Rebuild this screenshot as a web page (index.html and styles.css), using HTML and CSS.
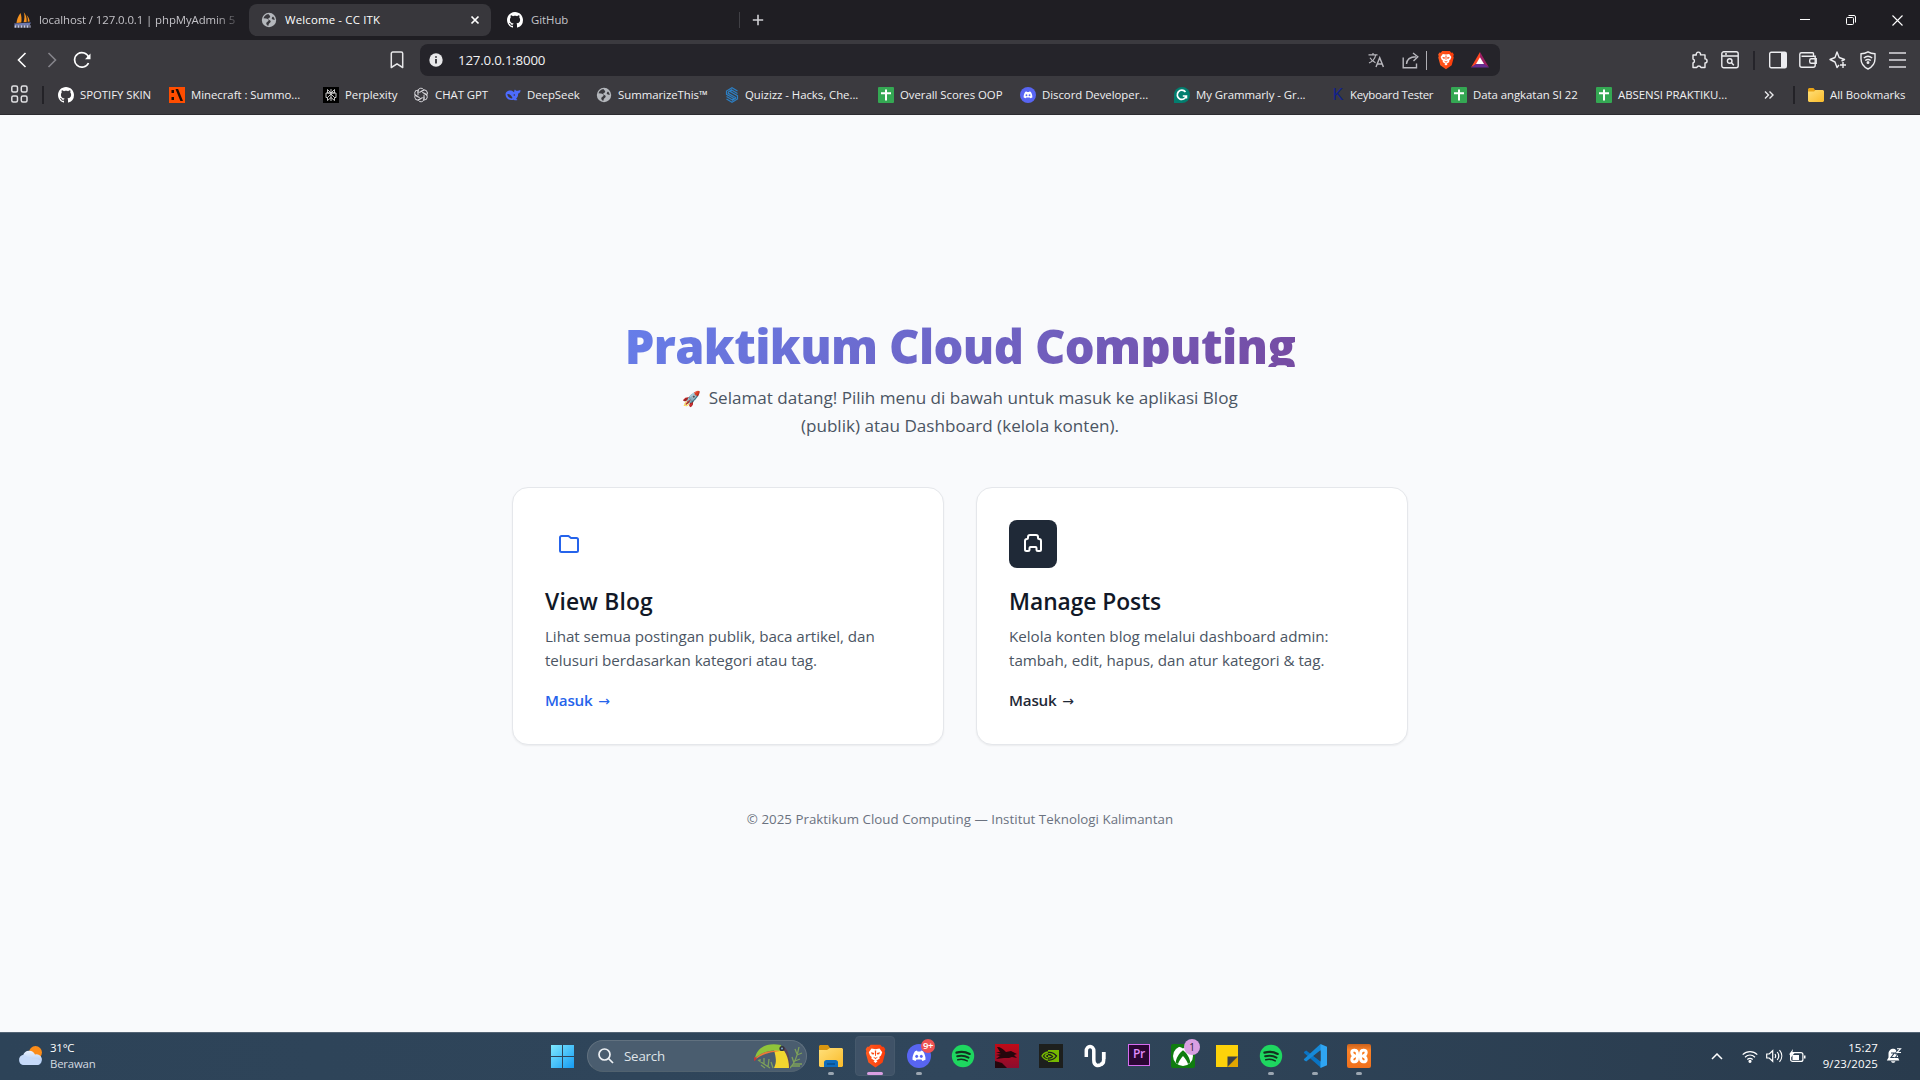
FILE: index.html
```
<!DOCTYPE html>
<html lang="id">
<head>
<meta charset="utf-8">
<title>Welcome - CC ITK</title>
<link rel="stylesheet" href="styles.css">
</head>
<body>
<svg class="defs" aria-hidden="true">
  <defs>
    <linearGradient id="gWin" x1="0" y1="0" x2="1" y2="1"><stop offset="0" stop-color="#7fe9ff"/><stop offset="1" stop-color="#159bf3"/></linearGradient>
    <linearGradient id="gFolder" x1="0" y1="0" x2="1" y2="1"><stop offset="0" stop-color="#ffe07a"/><stop offset="1" stop-color="#fabb2a"/></linearGradient>
    <linearGradient id="gCloud" x1="0" y1="0" x2="0" y2="1"><stop offset="0" stop-color="#eaf2ff"/><stop offset="1" stop-color="#a3c2f0"/></linearGradient>
    <linearGradient id="gBrave" x1="0" y1="0" x2="1" y2="0"><stop offset="0" stop-color="#ff5a1f"/><stop offset="1" stop-color="#fb3b0a"/></linearGradient>
    <linearGradient id="gXampp" x1="0" y1="0" x2="0" y2="1"><stop offset="0" stop-color="#c9611c"/><stop offset=".25" stop-color="#fb8227"/><stop offset="1" stop-color="#f0701c"/></linearGradient>
    <linearGradient id="gRed" x1="0" y1="0" x2="0" y2="1"><stop offset="0" stop-color="#c00a17"/><stop offset="1" stop-color="#8c0c2e"/></linearGradient>
    <symbol id="github" viewBox="0 0 16 16"><path fill="#fff" d="M8 0C3.58 0 0 3.58 0 8c0 3.54 2.29 6.53 5.47 7.59.4.07.55-.17.55-.38 0-.19-.01-.82-.01-1.49-2.01.37-2.53-.49-2.69-.94-.09-.23-.48-.94-.82-1.13-.28-.15-.68-.52-.01-.53.63-.01 1.08.58 1.23.82.72 1.21 1.87.87 2.33.66.07-.52.28-.87.51-1.07-1.78-.2-3.64-.89-3.64-3.95 0-.87.31-1.59.82-2.15-.08-.2-.36-1.02.08-2.12 0 0 .67-.21 2.2.82.64-.18 1.32-.27 2-.27s1.36.09 2 .27c1.53-1.04 2.2-.82 2.2-.82.44 1.1.16 1.92.08 2.12.51.56.82 1.27.82 2.15 0 3.07-1.87 3.75-3.65 3.95.29.25.54.73.54 1.48 0 1.07-.01 1.93-.01 2.2 0 .21.15.46.55.38A8.01 8.01 0 0 0 16 8c0-4.42-3.58-8-8-8z"/></symbol>
    <symbol id="globe" viewBox="0 0 16 16"><circle cx="8" cy="8" r="7.200" fill="#b4b7bc"/><path fill="#3a393e" d="M7.500 2C5 2.500 3 4 2.500 6.200l2.500.3c1.500.3 3 1 2.500 2.300-.3 1-1.800 1-2.200 2.200-.2 1 .3 1.800 1.200 2.500l1 .2c0-1.200.3-2 1.200-2.700.8-.7 1.300-1.500.8-2.300-.6-.9-2-.8-2.300-1.800 0-1 1.600-1 2-1.900.3-.8-.7-1.500-1.700-2.800zM12 4.500c-.7.700-1.500 1.400-1.200 2.300.5.9 1.700.7 2.900 1.300-.1-1.500-.7-2.700-1.700-3.600z"/></symbol>
    <symbol id="sheets" viewBox="0 0 16 16"><rect width="16" height="16" rx="1" fill="#34a853"/><path stroke="#fff" stroke-width="2" d="M8 2.500v11M3 6.200h10"/></symbol>
    <symbol id="discord" viewBox="0 0 24 24"><circle cx="12" cy="12" r="12" fill="#5865f2"/><path fill="#fff" d="M8 7.200 10 6.600l.5 1h3l.5-1 2 .6c1.800 2.600 2.700 5.600 2.500 8.600L15.500 17l-1-1.400h-5L8.500 17l-3-1.200c-.2-3 .7-6 2.500-8.600z"/><ellipse cx="9.700" cy="12.300" rx="1.400" ry="1.600" fill="#5865f2"/><ellipse cx="14.300" cy="12.300" rx="1.400" ry="1.600" fill="#5865f2"/></symbol>
    <symbol id="spotify" viewBox="0 0 24 24"><circle cx="12" cy="12" r="11.200" fill="#1ed760"/><g fill="none" stroke="#14301f" stroke-linecap="round"><path stroke-width="2.300" d="M5.500 8.600c4.500-1.300 9.300-.8 13.200 1.300"/><path stroke-width="2" d="M6.200 12.300c4-1 8-.5 11.300 1.300"/><path stroke-width="1.600" d="M6.800 15.700c3.400-.8 6.600-.4 9.400 1.200"/></g></symbol>
    <symbol id="brave" viewBox="0 0 20 24"><path fill="url(#gBrave)" d="M5.200.8h9.600l1.700 2 1.700-.1 1.600 2.500-.7 2 .6 1.800-2.600 9.500L10 23.600l-7.100-5.100L.3 9l.6-1.800-.7-2 1.600-2.500 1.700.1z"/><path fill="#fff" d="M6 4.500l4 .7 4-.7 2.700 3.700-1.200 3.300-1.700 1.500.4 1.500L10 17.200l-4.200-2.700.4-1.500-1.700-1.500-1.200-3.300z"/><path fill="#fb4a15" d="M5.500 8.300l3.300.6-.5 1.500-2-.2zM14.500 8.300l-3.300.6.5 1.500 2-.2zM9.300 6.500h1.400L10.400 12h-.8zM7.500 12.800l2.500 1 2.500-1-2.500 2.500z"/><path fill="#fff" d="M8 17.300l2-1 2 1-2 1.600z"/></symbol>
  </defs>
</svg>

<header class="browser">
  <div class="tabs">
    <div class="tab tab-first">
      <svg width="17" height="17" viewBox="0 0 17 17"><path fill="#f7931e" d="M6.500 1C4 4 2.800 8 2.500 11l4.800-.6C7.800 7 7.500 4 6.500 1zM9.800.3c1 3 .8 7-.2 10l3-.4C13 6 12 2.500 9.800.3zM12.500 3c1.200 2 1.500 4.500 1.200 6.800l2-.4c-.3-2.500-1.500-5-3.200-6.400z"/><path fill="#6c78af" d="M0 11.500l17-1-1.500 3H1z"/><path stroke="#c3c8e6" stroke-dasharray="2 1" stroke-width="2.500" d="M.5 14.500h16"/></svg>
      <span class="tab-label fade">localhost / 127.0.0.1 | phpMyAdmin 5</span>
    </div>
    <div class="tab tab-active">
      <svg width="16" height="16"><use href="#globe"/></svg>
      <span class="tab-label">Welcome - CC ITK</span>
      <svg class="tab-close" width="10" height="10" viewBox="0 0 10 10"><path stroke="#fff" stroke-width="1.700" d="M1.500 1.500l7 7M8.500 1.500l-7 7"/></svg>
    </div>
    <div class="tab tab-third">
      <svg width="16" height="16"><use href="#github"/></svg>
      <span class="tab-label">GitHub</span>
    </div>
    <svg class="newtab" width="12" height="12" viewBox="0 0 12 12"><path stroke="#d0d0d4" stroke-width="1.600" d="M6 .8v10.400M.8 6h10.400"/></svg>
    <div class="window-controls">
      <svg width="10" height="12" viewBox="0 0 10 12"><path stroke="#fff" d="M0 5.500h10"/></svg>
      <svg width="10" height="10" viewBox="0 0 10 10" fill="none" stroke="#fff"><rect x=".5" y="2.500" width="7" height="7" rx="1"/><path d="M2.500.5H8A1.500 1.500 0 0 1 9.500 2v5.500"/></svg>
      <svg width="11" height="11" viewBox="0 0 11 11"><path stroke="#fff" stroke-width="1.100" d="M.5.5l10 10M10.500.5l-10 10"/></svg>
    </div>
  </div>

  <div class="toolbar">
    <div class="nav">
      <svg width="10" height="16" viewBox="0 0 10 16" fill="none" stroke="#fff" stroke-width="1.600"><path d="M8.500 1L1.500 8l7 7"/></svg>
      <svg width="10" height="16" viewBox="0 0 10 16" fill="none" stroke="#85848a" stroke-width="1.600"><path d="M1.500 1l7 7-7 7"/></svg>
      <svg width="18" height="18" viewBox="0 0 18 18" fill="none" stroke="#fff" stroke-width="1.700"><path d="M15.500 12A7.300 7.300 0 1 1 15.800 6.500"/><path fill="#fff" stroke="none" d="M17.500 2.500v5.700h-5.500z"/></svg>
    </div>
    <svg class="bookmark" width="14" height="18" viewBox="0 0 14 18"><path fill="none" stroke="#e6e6e8" stroke-width="1.500" stroke-linejoin="round" d="M2.800 1h8.400c.9 0 1.500.6 1.500 1.500V16.500L7 12.800 1.300 16.500V2.500C1.300 1.600 1.900 1 2.800 1z"/></svg>
    <div class="address">
      <svg width="14" height="14" viewBox="0 0 14 14"><circle cx="7" cy="7" r="6.700" fill="#e8e8ea"/><path stroke="#25242a" stroke-width="1.700" d="M7 6v4.500M7 3.200v1.600"/></svg>
      <span class="url">127.0.0.1:8000</span>
      <div class="address-actions">
        <svg width="16" height="16" viewBox="0 0 16 16" fill="none" stroke="#b9b8be" stroke-width="1.200"><path d="M.5 2.800h9M5 1v1.800M2 5.800c1.500 2.500 3.500 4 5.500 5M7.700 3C7 6.500 4.500 9.500 1 11"/><path stroke-width="1.400" d="M8 15l3.700-9.300L15.400 15M9.200 12h5"/></svg>
        <svg width="17" height="17" viewBox="0 0 17 17" fill="none" stroke="#b9b8be" stroke-width="1.400"><path d="M1.200 5.500v10.200h13.300V11.500"/><path d="M4.500 12c.3-4.500 3-7 9.500-7.200M11 1l4.800 3.700L11.500 9"/></svg>
        <i class="address-sep"></i>
        <svg width="16" height="20"><use href="#brave"/></svg>
        <svg width="18" height="16" viewBox="0 0 18 16"><path fill="#ff4724" d="M9 0L0 15.500 9 10z"/><path fill="#9e1f63" d="M9 0l9 15.500L9 10z"/><path fill="#662d91" d="M0 15.500h18L9 9z"/><path fill="#fff" d="M9 5.300l4 6.700H5z"/></svg>
      </div>
    </div>
    <div class="actions">
      <svg width="18" height="18" viewBox="0 0 18 18" fill="none" stroke="#ededf0" stroke-width="1.400" stroke-linejoin="round"><path d="M2 4h3.300a2.200 2.200 0 1 1 4.200-.1H14v4a2 2 0 1 1 0 4.100v4.500h-4a2.200 2.200 0 0 0-4.200 0H2V12a2.100 2.100 0 0 0 0-4z"/></svg>
      <svg width="18" height="18" viewBox="0 0 18 18" fill="none" stroke="#ededf0" stroke-width="1.400"><rect x=".8" y=".8" width="16.400" height="16" rx="2"/><path d="M1 5h16M4 3h2"/><circle cx="8.700" cy="10" r="2.300"/><path d="M10.500 11.700l2.300 2.500"/></svg>
      <i class="action-sep"></i>
      <svg width="18" height="18" viewBox="0 0 18 18"><rect x=".7" y="1.200" width="16.600" height="15.600" rx="1.500" fill="none" stroke="#ededf0" stroke-width="1.400"/><path fill="#ededf0" d="M12 1.500h5v15h-5z"/></svg>
      <svg width="18" height="16" viewBox="0 0 18 16" fill="none" stroke="#ededf0" stroke-width="1.400"><path d="M14.500 4V1.500a.8.800 0 0 0-.8-.8H2.500C1.500.7.800 1.400.800 2.300v11c0 1.200.7 2 2 2h11.400c1.300 0 2-.8 2-2V4.200H2.500"/><path d="M17.200 6.700h-5a1.500 1.500 0 0 0-1.500 1.500v1.600c0 .9.600 1.500 1.500 1.500h5z"/></svg>
      <svg width="18" height="18" viewBox="0 0 18 18" fill="none" stroke="#ededf0" stroke-width="1.400" stroke-linejoin="round"><path d="M10 14l-2 2.500-2-5.500L1 8.500 6 6.500 8 1l2.200 5.500L15.500 8.500l-3 1.500"/><path d="M14 11v6M11 14h6"/></svg>
      <svg width="18" height="19" viewBox="-1 0 18 19" fill="none" stroke="#ededf0" stroke-width="1.400"><path d="M8 .8c2.300 1.400 4.600 1.900 7 2v5c0 4.800-2.800 8.200-7 10.200C3.800 16 1 12.600 1 7.800v-5c2.400-.1 4.700-.6 7-2z"/><path d="M3.800 7c2.500-2 5.900-2 8.400 0M5.200 9.500c1.700-1.300 3.900-1.300 5.600 0"/><circle cx="8" cy="11.500" r=".8"/></svg>
      <svg width="17" height="18" viewBox="0 0 17 18"><path stroke="#b4b3b8" stroke-width="2" d="M0 2h17M0 9h17M0 16h17"/></svg>
    </div>
  </div>

  <nav class="bookmarks">
    <div><svg width="17" height="19" viewBox="0 0 17 19" fill="none" stroke="#dfdfe2" stroke-width="1.500"><rect x=".8" y="1" width="5.700" height="6" rx="1.500"/><rect x="10.300" y="1" width="5.700" height="6" rx="1.500"/><rect x=".8" y="11" width="5.700" height="6" rx="1.500"/><rect x="10.300" y="11" width="5.700" height="6" rx="1.500"/></svg></div>
    <i class="bookmark-sep"></i>
    <div><svg width="16" height="16"><use href="#github"/></svg><span>SPOTIFY SKIN</span></div>
    <div><svg width="16" height="16" viewBox="0 0 16 16"><path fill="#ff4d00" d="M0 0h16v16H0z"/><path fill="#1b0d06" d="M2.500 3h2.500v3H2.500zM2.500 10h2.500v3H2.500zM6.500 2h2.600L14 14h-2.600z"/></svg><span>Minecraft : Summo...</span></div>
    <div><svg width="16" height="16" viewBox="0 0 16 16"><path d="M0 0h16v16H0z"/><path fill="none" stroke="#d8d8d8" stroke-width=".9" d="M8 2v12M4.500 2.500L8 6l3.500-3.500V6h-7zM3 6h10v4.500h-1.500L8 7l-3.500 3.500H3zM4.500 10.500V13.500L8 10.500l3.500 3v-3"/></svg><span>Perplexity</span></div>
    <div><svg width="16" height="16" viewBox="0 0 16 16" fill="none" stroke="#d2d1d6" stroke-width="1"><g id="petal"><path d="M5 8.200V4.200a3 3 0 0 1 5.600-1.500M8 4.600l3.300-1.900"/></g><use href="#petal" transform="rotate(60 8 8)"/><use href="#petal" transform="rotate(120 8 8)"/><use href="#petal" transform="rotate(180 8 8)"/><use href="#petal" transform="rotate(240 8 8)"/><use href="#petal" transform="rotate(300 8 8)"/></svg><span>CHAT GPT</span></div>
    <div><svg width="16" height="16" viewBox="0 0 16 16"><path fill="#4d6bfe" d="M.5 7C.8 4.500 3.500 3 6 3.500c1.500.2 2 1.200 3.200 1.800C9 3.800 9.600 3 10 2.500c.5 1.200 1.500 1.500 2.600 1.300.9-.3 1.500-.8 3-.6-.2 1.900-1.100 2.900-2.500 3.300.1 2.300-.6 4-2 5.200l1.400 1.200c-1.500.7-2.800.5-3.800-.1C4.500 14 .3 11.500.5 7z"/><path fill="#3a393e" d="M2.300 7.200c2-.5 3.700 1 5 3.400.8 1.200-1.500 1-2.700.2C3.200 9.900 2.500 8.700 2.300 7.200z"/><circle cx="9.300" cy="8" r=".8" fill="#3a393e"/></svg><span>DeepSeek</span></div>
    <div><svg width="16" height="16"><use href="#globe"/></svg><span>SummarizeThis™</span></div>
    <div><svg width="14" height="16" viewBox="1 0 14 16" fill="none" stroke="#2c7fc4" stroke-width="1.200"><path d="M13.500 4L8 .8 2.500 4v3.300L10 11.600 8 12.700 2.500 9.500M2.500 12L8 15.200l5.500-3.200V8.700L6 4.400l2-1.100 5.500 3.200M4.300 5v1.300l7.400 4.300v.6L8 13.500M4.300 5L8 2.500"/></svg><span>Quizizz - Hacks, Che...</span></div>
    <div><svg width="16" height="16"><use href="#sheets"/></svg><span>Overall Scores OOP</span></div>
    <div><svg width="16" height="16"><use href="#discord"/></svg><span>Discord Developer...</span></div>
    <div><svg width="16" height="16" viewBox="0 0 16 16"><path fill="#027e6f" d="M8 0a8 8 0 0 1 0 16H0V8a8 8 0 0 1 8-8z"/><path fill="none" stroke="#fff" stroke-width="1.700" d="M11.500 5A4.600 4.600 0 1 0 12.300 9H8.800M12.400 8.500v3"/></svg><span>My Grammarly - Gr...</span></div>
    <div class="keyboard"><b class="key">K</b><span>Keyboard Tester</span></div>
    <div><svg width="16" height="16"><use href="#sheets"/></svg><span>Data angkatan SI 22</span></div>
    <div><svg width="16" height="16"><use href="#sheets"/></svg><span>ABSENSI PRAKTIKU...</span></div>
    <div class="more"><svg width="10" height="8" viewBox="0 0 10 8" fill="none" stroke="#e9e9ec" stroke-width="1.400"><path d="M1 .5L4.500 4 1 7.500M5.500.5L9 4 5.500 7.500"/></svg></div>
    <i class="bookmark-sep"></i>
    <div><svg width="16" height="14" viewBox="0 0 16 14"><path fill="#e8a317" d="M1 0h4.500L7 2h8v3H0V1z"/><path fill="url(#gFolder)" d="M0 3.500h6L7.500 2H15l1 1v10l-1 1H1l-1-1z"/></svg><span>All Bookmarks</span></div>
  </nav>
</header>

<main class="page">
  <h1>Praktikum Cloud Computing</h1>
  <p class="lead"><span class="emoji">🚀</span> Selamat datang! Pilih menu di bawah untuk masuk ke aplikasi Blog<br>(publik) atau Dashboard (kelola konten).</p>
  <div class="cards">
    <article class="card">
      <div class="card-icon icon-blue"><svg width="24" height="24" viewBox="0 0 24 24" fill="none" stroke="#2563eb" stroke-width="2" stroke-linejoin="round"><path d="M3 5.500A1.500 1.500 0 0 1 4.500 4h7l2.500 2h5.500A1.500 1.500 0 0 1 21 7.500v11a1.500 1.500 0 0 1-1.500 1.500h-15A1.500 1.500 0 0 1 3 18.500z"/></svg></div>
      <h2>View Blog</h2>
      <p>Lihat semua postingan publik, baca artikel, dan<br>telusuri berdasarkan kategori atau tag.</p>
      <a class="link-blue">Masuk <span>→</span></a>
    </article>
    <article class="card">
      <div class="card-icon icon-dark"><svg width="24" height="24" viewBox="0 0 24 24" fill="none" stroke="#fff" stroke-width="2" stroke-linejoin="round"><path d="M9 3h6a2 2 0 0 1 2 2v1a1 1 0 0 0 1 1 2 2 0 0 1 2 2v8.500a1.500 1.500 0 0 1-1.500 1.500H17a1.500 1.500 0 0 1-1.500-1.500V16a1 1 0 0 0-1-1h-5a1 1 0 0 0-1 1v1.500A1.500 1.500 0 0 1 7 19H5.500A1.500 1.500 0 0 1 4 17.500V9a2 2 0 0 1 2-2 1 1 0 0 0 1-1V5a2 2 0 0 1 2-2z"/></svg></div>
      <h2>Manage Posts</h2>
      <p>Kelola konten blog melalui dashboard admin:<br>tambah, edit, hapus, dan atur kategori &amp; tag.</p>
      <a class="link-dark">Masuk <span>→</span></a>
    </article>
  </div>
  <footer>© 2025 Praktikum Cloud Computing — Institut Teknologi Kalimantan</footer>
</main>

<div class="taskbar">
  <div class="weather">
    <svg width="26" height="24" viewBox="0 0 26 24"><circle cx="17.500" cy="8.500" r="6.500" fill="#fb8c1a"/><path fill="url(#gCloud)" d="M6 21a5 5 0 0 1-.8-9.900A6.300 6.300 0 0 1 17 10.500a5.400 5.400 0 0 1 3 10.500z"/><path fill="#c6daf9" d="M6 21a5 5 0 0 1-.3-9.900c2 0 3.300 1 4 2.200 2-.8 4.300 0 5 1.700 2-1 5-.5 8 2-.3 2.500-1.500 3.700-3 4z"/></svg>
    <div><b>31°C</b><span>Berawan</span></div>
  </div>
  <div class="apps">
    <div class="start"><svg width="23" height="23" viewBox="0 0 23 23"><path fill="url(#gWin)" d="M0 0h11v11H0zM12 0h11v11H12zM0 12h11v11H0zM12 12h11v11H12z"/></svg></div>
    <div class="search">
      <svg width="16" height="16" viewBox="0 0 16 16" fill="none" stroke="#eef1f4" stroke-width="1.700"><circle cx="6.500" cy="6.500" r="5.500"/><path d="M10.500 10.500l4.500 4.500"/></svg>
      <span>Search</span>
      <svg class="toucan" width="50" height="26" viewBox="0 0 50 26"><g stroke="#7da05a" stroke-width="1.300" fill="none"><path d="M17 25L5 17M12 25l-4-3M11 21V15M7 19v-3M15 24l1-8M20 25l-2-6"/><path d="M37 25c4-4 7-10 9-21M41 20l-2-6M42 18l5-2M44 12l5-2M44 11l-2-5M39 23h8M40 21h9"/></g><path fill="#5a4458" d="M29 3c5 1 8 8 8 22h-6z"/><path fill="#f3d52f" d="M21 7c4-4 9-3 12 4 2 4 3 9 3 14H21c3-6 2-10 0-18z"/><path fill="#8fc43a" d="M2 15C4 5 13-1 28 2l1 6C17 6 8 10 2 15z"/><path fill="#ee7a36" d="M2 16C8 9 16 7 27 8c-9 1-18 3-24 8z"/><path fill="#c83639" d="M1 14l3 1c-1 2-2 3-3 3z"/><circle cx="29" cy="5.500" r="2.600" fill="#31333a"/><circle cx="29" cy="5.500" r="1" fill="#7ba8d3"/></svg>
    </div>
    <div class="app running"><svg width="24" height="23" viewBox="0 0 24 23"><path fill="#d9960f" d="M1 0h8l2 3h12v6H0V1z"/><path fill="url(#gFolder)" d="M0 5h8l3-2h12l1 1v17l-1 1H1l-1-1z"/><path fill="#0f6cbd" d="M5 22v-4.500C5 16 6 15 7.500 15h9c1.500 0 2.500 1 2.500 2.500V22z"/><path stroke="#0a4d8c" stroke-width="1.500" d="M8 19h8"/></svg></div>
    <div class="app active"><svg width="21" height="24"><use href="#brave"/></svg></div>
    <div class="app running"><svg width="24" height="24"><use href="#discord"/></svg><em class="badge red">9+</em></div>
    <div class="app"><svg width="24" height="24"><use href="#spotify"/></svg></div>
    <div class="app"><svg width="24" height="24" viewBox="0 0 24 24"><path fill="url(#gRed)" d="M0 0h24v24H0z"/><path fill="#25060c" d="M2 3c4 0 6 2 9 5l5-1 6 3-3 1 3 3-5-1-3 1-5 0-8 1 4-3-4-1 5-1-5-2 4 0zM0 17l7 2 5 5H0z"/></svg></div>
    <div class="app"><svg width="24" height="24" viewBox="0 0 24 24"><path fill="#1d1f1d" d="M0 0h24v24H0z"/><path fill="#76b900" d="M9 6h11v12H9z"/><path fill="none" stroke="#1d1f1d" stroke-width="1.300" d="M9 8.500c4-.5 6.500 1 8.500 3.500-2 3-5 4.500-8.500 4"/><path fill="none" stroke="#76b900" stroke-width="1.400" d="M9 8C6 8.500 4 10 3 12c1.500 2.500 3.500 3.800 6 4M9 10c-1.500.3-2.500 1-3 2 .7 1.200 1.700 1.800 3 2"/><path fill="none" stroke="#1d1f1d" stroke-width="1.300" d="M9 10.500c2.500 0 3.500 1 4.500 2-1 1.300-2.500 1.700-4.500 1.500"/></svg></div>
    <div class="app"><svg width="22" height="24" viewBox="0 0 22 24"><path fill="none" stroke="#fff" stroke-width="3.500" d="M2.300 13V7c0-6 7.500-6 7.500 0v9c0 6.500 5 6 6.500 4.500M19.700 8v7"/><path fill="none" stroke="#fff" stroke-width="3.500" d="M19.700 8v8c0 2.500-1.500 4.500-4 4.800"/></svg></div>
    <div class="app pr-app"><span class="pr">Pr</span></div>
    <div class="app"><svg width="24" height="24" viewBox="0 0 24 24"><rect width="24" height="24" rx="2" fill="#107c10"/><circle cx="12" cy="12" r="10" fill="#fff"/><path fill="#107c10" d="M12 6.300c4 3 7 8 7.200 12.200l-2.200 1.500c-1-3-3-6-5-8-2 2-4 5-5 8l-2.200-1.500C5 14.300 8 9.300 12 6.300zM12 4.500C9.500 3 8 2.700 6.500 3.200 9.500 1.300 14.500 1.300 17.500 3.200 16 2.700 14.500 3 12 4.500z"/></svg><em class="badge pink">1</em></div>
    <div class="app"><svg width="22" height="22" viewBox="0 0 22 22"><path fill="#fdd20a" d="M0 0h22v11.500L11.500 22H0z"/><path fill="#3b3f46" d="M11.500 11.500H22L11.500 22z"/><path fill="#e2a600" d="M22 11.500V22H11.500z"/></svg></div>
    <div class="app running"><svg width="24" height="24"><use href="#spotify"/></svg></div>
    <div class="app running"><svg width="24" height="24" viewBox="0 0 24 24"><path fill="#0a74c4" d="M1.500 7.500l1.700-1 15 11.500V24L.8 8.800z"/><path fill="#1689d8" d="M.8 15.200L17.500 0 19 5 3.200 17.500l-1.700-1z"/><path fill="#2fa5f2" d="M17.500 0L24 2.800v18.400L17.500 24z"/><path fill="#2e4358" d="M17.500 7v10L11 12z"/></svg></div>
    <div class="app running"><svg width="24" height="24" viewBox="0 0 24 24"><rect width="24" height="24" rx="2" fill="url(#gXampp)"/><path fill="none" stroke="#fff" stroke-width="3" stroke-linejoin="round" d="M8 6.200C3.500 5.500 4 11 8 12c-4 1-4.500 6.500 0 5.800 3-.3 2.500-3 2.500-5.800h3c0 2.800-.5 5.500 2.500 5.800 4.500.7 4-4.800 0-5.800 4-1 4.500-6.500 0-5.800-3 .3-2.500 3-2.500 5.800h-3c0-2.800.5-5.500-2.500-5.800z"/></svg></div>
  </div>
  <div class="tray">
    <svg width="12" height="7" viewBox="0 0 12 7"><path fill="none" stroke="#fff" stroke-width="1.500" d="M1 6l5-5 5 5"/></svg>
    <svg width="16" height="13" viewBox="0 0 16 13" fill="none" stroke="#fff" stroke-width="1.200"><path d="M.7 4.700c4.200-4.200 10.400-4.200 14.600 0M3 7.200c3-2.900 7-2.900 10 0M5.300 9.500c1.700-1.500 3.700-1.500 5.400 0"/><circle cx="8" cy="11.300" r="1" fill="#fff"/></svg>
    <svg width="17" height="14" viewBox="0 0 17 14" fill="none" stroke="#fff" stroke-width="1.200"><path d="M.7 5v4h2.500l3.500 3.300V1.700L3.200 5zM9 5c.8 1.200.8 2.800 0 4M11.200 3c1.900 2.400 1.900 5.600 0 8M13.500 1.200c3 3.500 3 8.100 0 11.600"/></svg>
    <svg width="17" height="14" viewBox="0 0 17 14"><rect x="1.600" y="3.600" width="12.300" height="8.800" rx="2" fill="none" stroke="#fff" stroke-width="1.200"/><path fill="#fff" d="M15 6.500h1.500v3H15zM3.500 6H10v5H3.500zM4 0L0 5.500h2.200L1.500 9l4-5H3.300z"/></svg>
    <div class="clock"><span>15:27</span><span>9/23/2025</span></div>
    <svg class="bell" width="16" height="16" viewBox="0 0 16 16"><path fill="#fff" d="M7.500.8C4.500.8 2.500 2.800 2.500 6v3.500L.8 12.500h12.500L12 9.500V5L9 1zM5 13.300h4.400c-.8 2-3.600 2-4.400 0z"/><path fill="none" stroke="#2c4156" stroke-width="1.100" d="M5 5h3.300L5 9.500h3.500M9.500 6H12L9.500 9.500H12"/><path fill="none" stroke="#2c4156" stroke-width="2.500" d="M10.500.8h4L11 4.500h4"/><path fill="none" stroke="#fff" stroke-width="1.100" d="M11 .8h3.500L11 4.500h4"/></svg>
  </div>
</div>
</body>
</html>
```
FILE: styles.css
```
* { box-sizing: border-box; }
body {
  margin: 0;
  width: 1920px;
  height: 1080px;
  display: flex;
  flex-direction: column;
  overflow: hidden;
  font-family: "Open Sans", "Noto Sans", sans-serif;
  background: #f9fafc;
}
svg { display: block; flex: none; }
.defs { position: absolute; width: 0; height: 0; }
h1, h2, p { margin: 0; }

/* Browser chrome */
.browser { height: 115px; flex: none; font-size: 11.4px; color: #f0f0f2; white-space: nowrap; }
.tabs { height: 40px; background: #1f1e23; display: flex; align-items: center; }
.tab { display: flex; align-items: center; height: 32px; }
.tab-label { color: #c4c3c8; letter-spacing: -.05px; padding-bottom: 1px; }
.tab-first { width: 249px; padding-left: 14px; gap: 8px; }
.tab-first .tab-label { width: 200px; letter-spacing: -.08px; }
.fade { -webkit-mask-image: linear-gradient(90deg, #000 88%, transparent 102%); mask-image: linear-gradient(90deg, #000 88%, transparent 102%); }
.tab-active { width: 242px; padding: 0 11px 0 12px; gap: 8px; background: #38373c; border-radius: 8px; }
.tab-active .tab-label { color: #fff; flex: 1; letter-spacing: .17px; }
.tab-third { width: 249px; height: 16px; padding-left: 16px; gap: 8px; border-right: 1px solid #404045; }
.newtab { margin-left: 12px; }
.window-controls { margin-left: auto; margin-right: 17px; display: flex; align-items: center; gap: 36px; }

.toolbar { height: 40px; background: #3b3a3f; display: flex; align-items: center; }
.nav { display: flex; align-items: center; width: 390px; padding-left: 17px; gap: 20px; }
.nav svg:nth-child(3) { margin-left: -4px; }
.address { width: 1080px; height: 32px; margin-left: 16px; padding: 0 11px 0 9px; display: flex; align-items: center; background: #25242a; border-radius: 8px; }
.url { margin-left: 15px; font-size: 13.3px; letter-spacing: -.2px; color: #f2f2f4; padding-bottom: 1px; }
.address-actions { margin-left: auto; display: flex; align-items: center; }
.address-actions svg:nth-child(2) { margin-left: 18px; }
.address-sep { width: 1px; height: 19px; margin: 0 11px 0 7px; background: #b0afb4; }
.address-actions svg:nth-child(5) { margin-left: 17px; }
.actions { margin-left: 191px; display: flex; align-items: center; gap: 12px; }
.action-sep { width: 2px; height: 19px; margin: 0 1px 0 2px; background: #25242a; }
.action-sep { margin-right: 2px; }

.bookmarks {
  height: 35px;
  padding: 0 15px 5px 11px;
  background: #3b3a3f;
  border-bottom: 1px solid #2c2b30;
  display: grid;
  align-items: center;
  grid-template-columns: 31px 16px 111px 154px 90px 92px 91px 129px 153px 142px 154px 156px 121px 145px 168px 29px 15px 97px;
}
.bookmarks div { display: flex; align-items: center; gap: 6px; letter-spacing: -.04px; }
.bookmarks span { padding-bottom: 1px; }
.bookmark-sep { width: 2px; height: 18px; background: #232227; }
.keyboard span { letter-spacing: -.25px; margin-left: -2px; }
.key { width: 16px; font-family: "Liberation Sans", sans-serif; font-size: 16px; font-weight: 400; line-height: 18px; color: #10218b; text-align: center; }

/* Page content */
.page { height: 917px; flex: none; padding-top: 208px; display: flex; flex-direction: column; align-items: center; }
.page h1 {
  margin-bottom: -1px;
  padding-top: 1px;
  font-size: 47px;
  font-weight: 800;
  line-height: 44px;
  letter-spacing: -.62px;
  color: transparent;
  background: linear-gradient(135deg, #667eea 0%, #764ba2 100%);
  -webkit-background-clip: text;
  background-clip: text;
}
.page h1 { height: 44px; }
.lead { margin-top: 18px; text-align: center; font-size: 17.1px; line-height: 28px; letter-spacing: 0; color: #4b5563; }
.emoji { font-size: 15px; line-height: 1; margin-right: 3px; }
.cards { margin-top: 47px; display: grid; grid-template-columns: 432px 432px; gap: 32px; }
.card { height: 258px; padding: 32px; background: #fff; border: 1px solid #e5e7eb; border-radius: 16px; box-shadow: 0 1px 2px rgba(0, 0, 0, .06); }
.card-icon { width: 48px; height: 48px; border-radius: 8px; display: grid; place-items: center; }
.icon-dark { background: #1f2937; }
.card h2 { margin-top: 18px; font-size: 22.8px; font-weight: 600; line-height: 32px; letter-spacing: -.05px; color: #111827; }
.card:first-child h2 { letter-spacing: .2px; }
.card p { margin-top: 6px; font-size: 15.2px; line-height: 24px; letter-spacing: -.02px; color: #4b5563; }
.card:first-child p { letter-spacing: -.06px; }
.card a { display: block; margin-top: 16px; font-size: 15.2px; font-weight: 600; line-height: 24px; letter-spacing: -.2px; }
.card a span { margin-left: 2px; font-family: "Noto Sans", "DejaVu Sans", sans-serif; font-size: 14px; font-weight: 400; line-height: 1; }
.link-blue { color: #2563eb; }
.link-dark { color: #1f2937; }
footer { margin-top: 64px; font-size: 13.3px; line-height: 20px; letter-spacing: .03px; color: #6b7280; }

/* Taskbar */
.taskbar { height: 48px; flex: none; display: grid; grid-template-columns: 540px 1fr 210px; color: #fff; background: linear-gradient(90deg, #2d4358, #30465b 50%, #293b4d); border-top: 1px solid #536475; }
.weather { display: flex; align-items: center; padding: 0 0 1px 18px; gap: 6px; font-size: 11.4px; line-height: 16px; }
.weather div { display: flex; flex-direction: column; }
.weather b { font-weight: 400; letter-spacing: -.2px; }
.weather span { color: #d3dae0; letter-spacing: -.2px; }
.apps { display: flex; align-items: center; padding-bottom: 1px; }
.start { width: 47px; padding-left: 11px; }
.search { width: 220px; height: 32px; padding: 0 3px 0 10px; display: flex; align-items: center; gap: 10px; border-radius: 16px; background: #4a5d6f; border: 1px solid #61717f; border-bottom-color: #51626f; }
.search span { flex: 1; font-size: 13.3px; letter-spacing: -.18px; color: #dfe4e8; }
.app { position: relative; width: 40px; height: 40px; margin-left: 4px; display: grid; place-items: center; border-radius: 4px; }
.running::after, .active::after { content: ""; position: absolute; bottom: 1px; left: 17px; width: 6px; height: 3px; border-radius: 2px; background: #9ba6b1; }
.active { background: #3f5267; border: 1px solid #46596c; }
.active::after { left: 11px; bottom: 0; width: 16px; background: #d99fe2; }
.badge { position: absolute; font-style: normal; text-align: center; border-radius: 50%; }
.red { left: 22px; top: 3px; width: 14px; height: 14px; font-size: 9.5px; font-weight: 600; line-height: 13px; letter-spacing: -.5px; background: #ee5253; }
.pink { left: 21px; top: 3px; width: 16px; height: 16px; font-size: 10px; line-height: 16px; background: #d99fe2; color: #2b2430; }
.pr { width: 22px; height: 22px; margin-top: -2px; border: 1.5px solid #d66bf0; background: #2a0634; color: #e08bfa; font-size: 12px; font-weight: 600; line-height: 18px; text-align: center; letter-spacing: -.3px; }
.tray { display: flex; align-items: center; padding: 0 0 1px 1px; }
.tray svg:nth-child(2) { margin-left: 19px; }
.tray svg:nth-child(3) { margin-left: 8px; }
.tray svg:nth-child(4) { margin-left: 6px; }
.tray .bell { margin-left: 8px; }
.clock { width: 72px; display: flex; flex-direction: column; align-items: flex-end; font-size: 11.4px; line-height: 16px; letter-spacing: .15px; }
```
